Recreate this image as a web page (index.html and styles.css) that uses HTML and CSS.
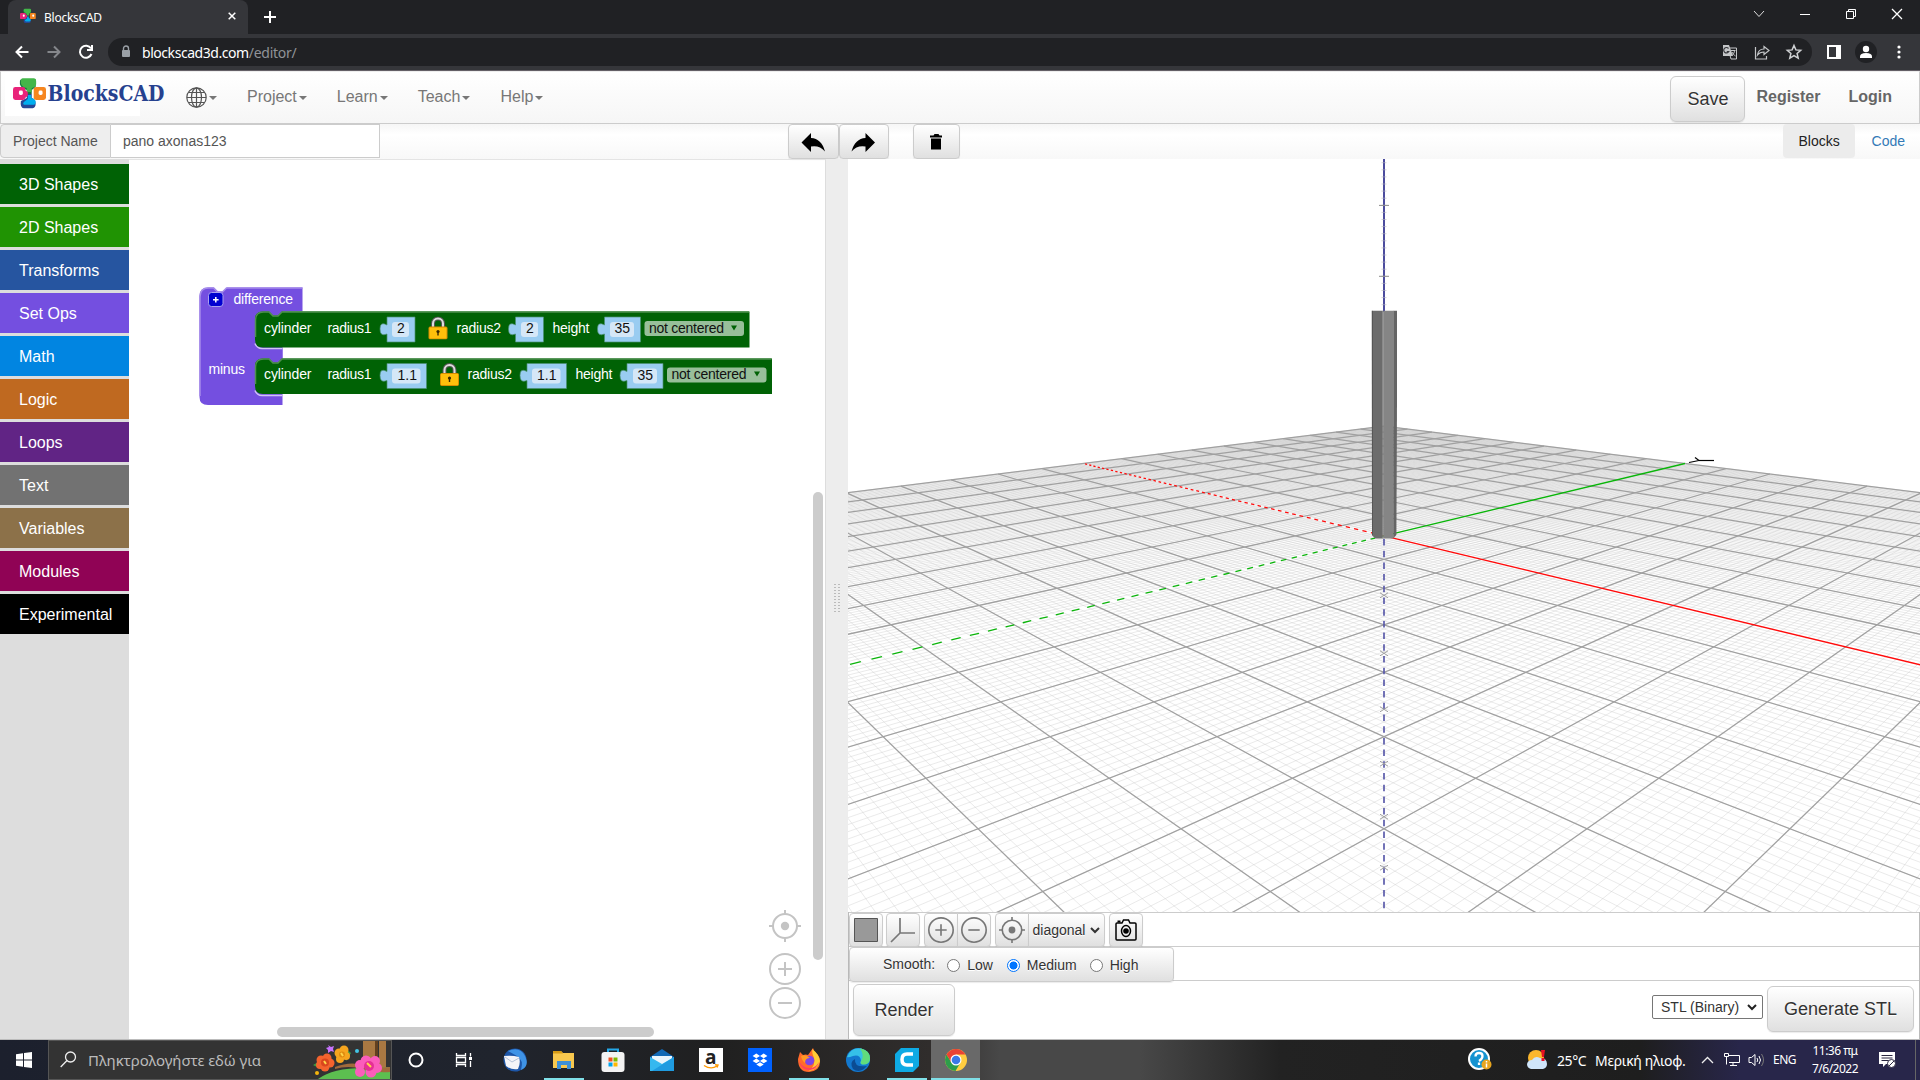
FILE: index.html
```html
<!DOCTYPE html>
<html lang="en">
<head>
<meta charset="utf-8">
<title>BlocksCAD</title>
<link rel="stylesheet" href="styles.css">
</head>
<body>
<svg class="defs" width="0" height="0">
  <defs>
    <symbol id="logo" viewBox="0 0 34 31">
      <path d="M7 3Q7 1 9 1H23V9L19 12V16H14V12Q8 10 7 6Z" fill="#1a7a40"/>
      <path d="M10 0H21Q23.500 0 23.500 3V6Q23 9 19 10V14H14V10Q9 9 8 5Q7.500 0 10 0Z" fill="#43b649"/>
      <path d="M8 23L14 20V16H19V20Q23 21 23 26Q23 30 20 30.500H11Q7 30 8 23Z" fill="#264796"/>
      <path d="M11 24L15 21V17H18.500V20Q23 21 23 24Q23 27 20 27H13Q9 27 11 24Z" fill="#00aeef"/>
      <rect x="0" y="9" width="12.500" height="13" rx="2.500" fill="#e9237a"/>
      <path d="M12 12l3 2v4l-3 2z" fill="#e9237a"/>
      <rect x="21" y="9" width="12.500" height="13" rx="2.500" fill="#f6861f"/>
      <rect x="6" y="12.500" width="4" height="4.500" rx="1.500" fill="#fff"/>
      <rect x="26" y="12.500" width="4" height="4.500" rx="1.500" fill="#fff"/>
    </symbol>
    <symbol id="lock" viewBox="0 0 20 23">
      <path d="M5 12V7a5 5 0 0 1 10 0v5" fill="none" stroke="#555" stroke-width="4"/>
      <path d="M5 12V7a5 5 0 0 1 10 0v5" fill="none" stroke="#ddd" stroke-width="2"/>
      <rect x="1" y="10.500" width="18" height="12" rx="1" fill="#ffc00b" stroke="#d98c00"/>
      <circle cx="10" cy="15" r="1.600" fill="#3a2800"/><path d="M9.300 15h1.400v4H9.300z" fill="#3a2800"/>
    </symbol>
    <symbol id="target" viewBox="0 0 32 32">
      <g fill="none" stroke="currentColor" stroke-width="2"><circle cx="16" cy="16" r="12"/><path d="M16 0v4M16 28v4M0 16h4M28 16h4"/></g><circle cx="16" cy="16" r="4.200" fill="currentColor"/>
    </symbol>
    <symbol id="plus" viewBox="0 0 32 32"><g fill="none" stroke="currentColor" stroke-width="2"><circle cx="16" cy="16" r="15"/><path d="M9 16h14M16 9v14"/></g></symbol>
    <symbol id="minus" viewBox="0 0 32 32"><g fill="none" stroke="currentColor" stroke-width="2"><circle cx="16" cy="16" r="15"/><path d="M9 16h14"/></g></symbol>
  </defs>
</svg>

<div class="tabstrip">
  <div class="tab">
    <svg width="16" height="16"><use href="#logo"/></svg>
    <span class="tab-title">BlocksCAD</span>
    <svg class="tab-close" width="8" height="8" viewBox="0 0 8 8"><path d="M.7.7l6.600 6.600M7.300.7L.7 7.300" stroke="#fff" stroke-width="1.500"/></svg>
  </div>
  <svg class="new-tab" width="12" height="12"><path d="M6 0v12M0 6h12" stroke="#fff" stroke-width="2"/></svg>
  <div class="window-controls">
    <svg width="46" height="34"><path d="M18 11l5 5.500 5-5.500" stroke="#ddd" fill="none"/></svg>
    <svg width="46" height="34"><path d="M18 14.500h10" stroke="#fff"/></svg>
    <svg width="46" height="34"><path d="M18.500 11.500h7v7h-7zM20.500 11.500v-2h7v7h-2" stroke="#fff" fill="none"/></svg>
    <svg width="46" height="34"><path d="M18 9l10 10M28 9L18 19" stroke="#fff" stroke-width="1.300"/></svg>
  </div>
</div>

<div class="navbar">
  <div class="nav-icons">
    <svg width="32" height="28"><path d="M28.500 14H16.500M22 8.500L16.500 14l5.500 5.500" stroke="#fff" stroke-width="2" fill="none"/></svg>
    <svg width="32" height="28"><path d="M15.500 14h12M22 8.500l5.500 5.500-5.500 5.500" stroke="#85878b" stroke-width="2" fill="none"/></svg>
    <svg width="32" height="28"><path d="M27 10.500A6 6 0 1 0 27.500 16M28 7v5h-5" stroke="#fff" stroke-width="2" fill="none"/></svg>
  </div>
  <div class="omnibox">
    <svg width="10" height="14"><path d="M2.500 6V3.500a2.500 2.500 0 0 1 5 0V6" stroke="#9aa0a6" stroke-width="1.400" fill="none"/><rect x="1" y="5" width="8" height="7" rx="1" fill="#9aa0a6"/></svg>
    <span class="host">blockscad3d.com</span><span class="path">/editor/</span>
    <div class="omni-icons">
      <svg width="32" height="28"><path d="M14 10h8.500v11H17z" fill="none" stroke="#c4c6c8"/><path d="M9 7h6l4 11H9z" fill="#c4c6c8"/><path d="M14.500 10.500a2.700 2.700 0 1 0 .3 3h-2" stroke="#35363a" stroke-width="1.200" fill="none"/><path d="M17 12.500h4.500M20.500 12.500c0 2-1 3.500-2.500 5M18 14c1 2 1.500 2.500 3.500 4" stroke="#c4c6c8" fill="none"/></svg>
      <svg width="32" height="28"><path d="M9.500 9v12h11v-3M11.500 17c.5-4 3-6 6.500-6V8.500l5 4-5 4V14c-3 0-5 1-6.500 3z" stroke="#c4c6c8" stroke-width="1.200" fill="none"/></svg>
      <svg width="32" height="28"><path d="M16 7.500l1.900 4.400 4.800.4-3.600 3.200 1.100 4.700-4.200-2.500-4.200 2.500 1.100-4.700-3.600-3.200 4.800-.4z" stroke="#d0d2d4" stroke-width="1.500" fill="none"/></svg>
    </div>
  </div>
  <svg class="side-panel" width="14" height="14"><path d="M1 1h12v12H1z" fill="none" stroke="#fff" stroke-width="2"/><path d="M9 1h4v12H9z" fill="#fff"/></svg>
  <svg class="avatar" width="22" height="22"><circle cx="11" cy="11" r="11" fill="#202124"/><circle cx="11" cy="8" r="3.200" fill="#fff"/><path d="M5 17v-1.500Q5 12 11 12t6 3.500V17z" fill="#fff"/></svg>
  <svg class="kebab" width="4" height="14" fill="#fff"><circle cx="2" cy="2" r="1.600"/><circle cx="2" cy="7" r="1.600"/><circle cx="2" cy="12" r="1.600"/></svg>
</div>

<header class="app-header">
  <div class="brand">
    <svg width="135" height="44" viewBox="0 0 135 44"><use href="#logo" x="8" y="6" width="33.500" height="31"/><text class="brand-text" x="42.500" y="28.500" textLength="117" lengthAdjust="spacingAndGlyphs">BlocksCAD</text></svg>
  </div>
  <nav class="menu">
    <a class="globe"><svg width="21" height="21" viewBox="0 0 21 21"><g fill="none" stroke="#555" stroke-width="1.200"><circle cx="10.500" cy="10.500" r="9.700"/><ellipse cx="10.500" cy="10.500" rx="5" ry="9.700"/><path d="M10.500 1v19M1 10.500h19M2.500 5.500h16M2.500 15.500h16"/></g></svg><i class="caret"></i></a>
    <a>Project<i class="caret"></i></a><a>Learn<i class="caret"></i></a><a>Teach<i class="caret"></i></a><a>Help<i class="caret"></i></a>
  </nav>
  <div class="account"><button class="btn large save">Save</button><a class="register">Register</a><a>Login</a></div>
</header>

<div class="project-bar">
  <label class="addon">Project Name</label><div class="name-input">pano axonas123</div>
  <div class="edit-buttons">
    <button class="btn"><svg width="24" height="19"><path d="M.5 10.500L10 1v5Q20.500 6.500 24 19.500 18.500 13 10 14.500V20z" fill="#000"/></svg></button>
    <button class="btn"><svg width="24" height="19"><path d="M23 10.500L13.500 1v5Q3 6.500-.5 19.500 5 13 13.500 14.500V20z" fill="#000"/></svg></button>
    <button class="btn trash"><svg width="12" height="16"><path d="M-1 1.500h3.500l1-1.500h4l1 1.500H11v2H-1zM0 4.500h10v11H0z" fill="#000"/></svg></button>
  </div>
  <div class="view-tabs"><a class="active">Blocks</a><a>Code</a></div>
</div>

<main class="editor">
  <aside class="toolbox">
    <div class="cat shapes3d">3D Shapes</div><div class="cat shapes2d">2D Shapes</div><div class="cat transforms">Transforms</div><div class="cat setops">Set Ops</div><div class="cat math">Math</div><div class="cat logic">Logic</div><div class="cat loops">Loops</div><div class="cat text">Text</div><div class="cat variables">Variables</div><div class="cat modules">Modules</div><div class="cat experimental">Experimental</div>
  </aside>
  <section class="workspace">
    <svg class="blocks" width="696" height="880" viewBox="129 159 696 880">
      <path d="M199.500 397V296q0-8.500 8.500-8.500h6l4 4h5l4-4h75.500v24H282.500V358v47H208q-8.500 0-8.500-8z" fill="#744fe0"/>
      <path d="M200 396V297q0-9 8.500-9h5l4 4h5l4-4h76" fill="none" stroke="#a58bea" stroke-width="1.500"/>
      <path d="M256 348H282.500V358H256z" fill="#744fe0"/>
      <path d="M255 343.500q2 5 7 5h20.500M255 390.500q2 5 7 5h20.500" stroke="#d0c3f5" stroke-width="1.500" fill="none"/>
      <path d="M255 319q0-7.500 8-7.500h6l4 4h5l4-4H749.500V347.500H263q-8 0-8-8z" fill="#006205"/>
      <path d="M255.500 337v-17q0-8 8-8h5.500l4 4h5l4-4H749" fill="none" stroke="#4e904f" stroke-width="1.500"/>
      <path d="M255 366q0-7.500 8-7.500h6l4 4h5l4-4H772V394H263q-8 0-8-8z" fill="#006205"/>
      <path d="M255.500 384v-17q0-8 8-8h5.500l4 4h5l4-4H771.500" fill="none" stroke="#4e904f" stroke-width="1.500"/>
      <rect x="208.500" y="292.500" width="14.500" height="14" rx="3" fill="#0000d0" stroke="#aaa0f0"/>
      <path d="M215.800 297v5.500M213 299.700h5.600" stroke="#fff" stroke-width="1.500"/>
      <g class="block-label">
        <text x="233.500" y="304" textLength="59.500">difference</text><text x="208.500" y="374" textLength="36.500">minus</text>
        <text x="264" y="333" textLength="47.500">cylinder</text><text x="327.500" y="333" textLength="44">radius1</text><text x="456.500" y="333" textLength="44.500">radius2</text><text x="552.500" y="333" textLength="37">height</text>
        <text x="264" y="379" textLength="47.500">cylinder</text><text x="327.500" y="379" textLength="44">radius1</text><text x="467.500" y="379" textLength="44.500">radius2</text><text x="575.500" y="379" textLength="37">height</text>
      </g>
      <g class="value">
        <path d="M387 317h28v25h-28v-8q-7 3-7-5t7-4zM515.500 317h28v25h-28v-8q-7 3-7-5t7-4zM604.500 317h36v25h-36v-8q-7 3-7-5t7-4z"/>
        <path d="M387 363.500h39.500v25H387v-8q-7 3-7-5t7-4zM527 363.500h39.500v25H527v-8q-7 3-7-5t7-4zM627 363.500h36v25h-36v-8q-7 3-7-5t7-4z"/>
      </g>
      <g class="field">
        <rect x="392" y="322" width="17" height="15" rx="3"/><rect x="521" y="322" width="17" height="15" rx="3"/><rect x="610" y="322" width="24" height="15" rx="3"/>
        <rect x="392" y="368.500" width="28.500" height="15" rx="3"/><rect x="532" y="368.500" width="28.500" height="15" rx="3"/><rect x="633" y="368.500" width="24" height="15" rx="3"/>
      </g>
      <g class="drop"><rect x="644.500" y="321" width="99.500" height="15" rx="3"/><rect x="667" y="367.500" width="99.500" height="15" rx="3"/></g>
      <g class="field-text">
        <text x="397" y="333">2</text><text x="526" y="333">2</text><text x="614.500" y="333">35</text><text x="397.500" y="380">1.1</text><text x="537" y="380">1.1</text><text x="637.500" y="380">35</text>
        <text x="649" y="333" textLength="75">not centered</text><text x="671.500" y="379" textLength="75">not centered</text>
      </g>
      <path d="M731 325.500h6l-3 5zM754 371.500h6l-3 5z" fill="#006205"/>
      <use href="#lock" x="428" y="316.500" width="20" height="23"/><use href="#lock" x="439.500" y="363" width="20" height="23"/>
    </svg>
    <div class="zoom-controls"><svg width="32" height="32"><use href="#target"/></svg><svg class="zin" width="32" height="32"><use href="#plus"/></svg><svg width="32" height="32"><use href="#minus"/></svg></div>
    <div class="vscroll"></div><div class="hscroll"></div>
  </section>
  <div class="splitter"><i></i><i></i></div>
  <section class="viewer">
    <canvas id="scene" width="1072" height="753"></canvas>
    <div class="view-buttons">
      <button class="btn"><svg width="24" height="24"><path d="M.5.5h23v23H.5z" fill="#999" stroke="#555"/></svg></button>
      <button class="btn axes"><svg width="26" height="26"><path d="M10 1v15h15M10 16l-9 9" fill="none" stroke="#777" stroke-width="1.700"/></svg></button>
      <button class="btn left"><svg width="26" height="26"><use href="#plus"/></svg></button><button class="btn right"><svg width="26" height="26"><use href="#minus"/></svg></button>
      <button class="btn left aim"><svg width="26" height="26"><use href="#target"/></svg></button><div class="btn right pick">diagonal<svg width="10" height="7"><path d="M1 1l4 4 4-4" fill="none" stroke="#333" stroke-width="2"/></svg></div>
      <button class="btn camera"><svg width="22" height="22"><g fill="none" stroke="#000" stroke-width="1.500"><path d="M3 4h4l1.500-3h5L15 4h5q1 0 1 1v15q0 1-1 1H2q-1 0-1-1V5q0-1 1-1z"/><ellipse cx="11" cy="12" rx="4.500" ry="5.500"/></g><circle cx="11" cy="12" r="2.800"/><path d="M2.500 1.500h3v2h-3z"/></svg></button>
    </div>
    <div class="smooth-row"><div class="btn smooth"><span>Smooth:</span><i class="radio"></i><b>Low</b><i class="radio on"></i><b>Medium</b><i class="radio"></i><b>High</b></div></div>
    <div class="render-row">
      <button class="btn large render">Render</button>
      <div class="select">STL (Binary)<svg width="10" height="7"><path d="M1 1l4 4 4-4" fill="none" stroke="#222" stroke-width="2"/></svg></div>
      <button class="btn large generate">Generate STL</button>
    </div>
  </section>
</main>

<footer class="taskbar">
  <div class="start"><svg width="16" height="16" fill="#fff"><path d="M0 2.200L7 1.200V7.500H0zM8 1L16 0V7.500H8zM0 8.500H7V14.800L0 13.800zM8 8.500H16V16L8 15z"/></svg></div>
  <div class="search">
    <svg width="17" height="17"><circle cx="10.500" cy="6" r="5" fill="none" stroke="#eee" stroke-width="1.300"/><path d="M7 9.500L.7 16" stroke="#eee" stroke-width="1.300"/></svg>
    <span>Πληκτρολογήστε εδώ για</span>
    <svg class="flowers" width="78" height="38">
      <path d="M50 0h12v38H50zM66 0h7v32h-7z" fill="#a97842"/><path d="M62 0h3v30h-3z" fill="#63401f"/>
      <path d="M5 38Q20 27 50 27l27-1v12z" fill="#5cbf50"/><path d="M22 26q15-6 28-2 12 3 27 2v5q-15 1-28-3-14-4-27 0z" fill="#a06a3c"/>
      <path d="M0 24l9-5 6 5-7 4zM31 6l7 6-5 8z" fill="#3d9b3f"/>
      <g fill="#f4632e"><circle cx="8" cy="19" r="4.500"/><circle cx="14" cy="17" r="4.500"/><circle cx="17" cy="22" r="4.500"/><circle cx="12" cy="26" r="4.500"/><circle cx="7" cy="24" r="4"/></g><circle cx="12" cy="21.500" r="4" fill="#d9461d"/>
      <g fill="#f6a51e"><circle cx="26" cy="12" r="4.500"/><circle cx="31" cy="9" r="4.500"/><circle cx="33" cy="15" r="4"/><circle cx="27" cy="18" r="4"/></g><circle cx="29" cy="13.500" r="3" fill="#e08c10"/>
      <g fill="#fb5dbb"><circle cx="47" cy="24" r="5"/><circle cx="53" cy="20" r="5.500"/><circle cx="62" cy="20" r="5"/><circle cx="64" cy="27" r="5"/><circle cx="58" cy="31" r="5.500"/><circle cx="47" cy="31" r="5"/></g><circle cx="56" cy="25" r="5" fill="#e52f96"/>
      <path d="M54 22l4 4M11 20l2 3M28 12l2 3" stroke="#ffd54a" stroke-width="2"/><circle cx="44" cy="10" r="2" fill="#43c5e4"/><circle cx="4" cy="32" r="2" fill="#f4b50e"/><path d="M15 4l3 2 3-1-1 3 1 3-3-1-3 2v-3l-2-2 3-1z" fill="#c874ff"/>
    </svg>
  </div>
  <div class="apps">
    <div><svg width="24" height="24"><circle cx="12" cy="12" r="6.500" fill="none" stroke="#fff" stroke-width="2"/></svg></div>
    <div><svg width="24" height="24"><path d="M4.500 5v2.500h9V5M4.500 19v-2.500h9V19M4.500 9.500h9v5h-9zM18.500 5v3.500M18.500 13v6" stroke="#fff" fill="none" stroke-width="1.300"/><path d="M17 9h3v3h-3z" fill="#fff"/></svg></div>
    <div><svg width="24" height="24"><circle cx="12" cy="12" r="11.500" fill="#1d56a8"/><path d="M5 3Q17-2 22 8t-4 14Q21 12 14 8T5 3z" fill="#3f93e6"/><path d="M1 8q8-1 15 1 2 6-1 12-7 1-12-3z" fill="#f4f4f8"/><path d="M2 9l7 5 7-4" fill="none" stroke="#b5c3da"/></svg></div>
    <div class="open"><svg width="24" height="24"><path d="M1 3h8l2 2h11v15H1z" fill="#f8c84e"/><path d="M1 3h8l2 2.500H1z" fill="#d69a14"/><path d="M5 21v-8h14v8h-4v-4H9v4z" fill="#3e90d6"/></svg></div>
    <div><svg width="24" height="24"><path d="M7 6V1.500h10V6" fill="none" stroke="#24a8e8" stroke-width="2"/><rect x=".5" y="4" width="23" height="20" rx="3" fill="#f3f3f3"/><path d="M7.500 9.500h4v4h-4z" fill="#f25022"/><path d="M12.500 9.500h4v4h-4z" fill="#7fba00"/><path d="M7.500 14.500h4v4h-4z" fill="#00a4ef"/><path d="M12.500 14.500h4v4h-4z" fill="#ffb900"/></svg></div>
    <div><svg width="24" height="24"><path d="M0 9l12-8 12 8v14H0z" fill="#1269b5"/><path d="M2 8h20v10H2z" fill="#eaf5fc"/><path d="M0 9l12 7 12-7v14H0z" fill="#35b8ef"/><path d="M24 9v14H2z" fill="#1f9be0"/></svg></div>
    <div><svg width="24" height="24"><path d="M0 0h24v24H0z" fill="#fff"/><text class="amazon" x="6" y="16">a</text><path d="M5 17.500q7 4.500 13 .5M16 16.800l3 .3-1 2.500" stroke="#f90" stroke-width="1.400" fill="none"/></svg></div>
    <div><svg width="24" height="24"><path d="M0 0h24v24H0z" fill="#0061fe"/><path d="M8.300 5.500l3.700 2.400-3.700 2.400-3.700-2.400zM15.700 5.500l3.700 2.400-3.700 2.400L12 7.900zM8.300 10.500l3.700 2.400-3.700 2.400-3.700-2.400zM15.700 10.500l3.700 2.400-3.700 2.400-3.700-2.400zM12 14.200l3.700 2.300-3.700 2.300-3.700-2.300z" fill="#fff"/></svg></div>
    <div class="open"><svg width="24" height="24"><path d="M1 11L3 4l3 3q3-1 5 0l5-7q1 3 3 5 4 3 4 9 0 9-11 10Q1 24 1 11z" fill="#ff6a2b"/><path d="M15 1q7 5 8 12-2 9-11 10 7-6 5-13-2-4-2-9z" fill="#ffcb35"/><path d="M2 13q2 9 11 9 7-1 9-8-4 7-11 6-6-1-9-7z" fill="#ff3d62"/><circle cx="12.500" cy="12.500" r="4.800" fill="#7d45e6"/><path d="M4 8q5-2 9 2-5 0-5 5-3-2-4-7z" fill="#ff9a24"/></svg></div>
    <div><svg width="24" height="24"><circle cx="12" cy="12" r="12" fill="#1378ce"/><path d="M1 9Q5-1 15 .5q9 2 9 10 0 6-7 6-4 0-2-4Q14 6 7 8q-5 2-6 1z" fill="#35c1e8"/><path d="M15 .5q9 2 9 10 0 6-7 6-3 0-2-3 4-6-1-13z" fill="#61dc7c"/><path d="M9 11q-1 9 12 7-7 8-14 3-4-7 2-10z" fill="#0b4c93"/></svg></div>
    <div class="open"><svg width="24" height="24"><path d="M6 0h18v18l-6 6H0V6z" fill="#0eaae4"/><path d="M18 6h-6q-5 0-5 5.500t5 5.500h6" stroke="#fff" stroke-width="3.500" fill="none"/></svg></div>
    <div class="open active"><svg width="24" height="24"><circle cx="12" cy="12" r="11" fill="#ffcd40"/><path d="M2.500 6.500A11 11 0 0 0 11.500 23l5-8.500-9 0z" fill="#2d9d4b"/><path d="M12 12L2.500 6.500A11 11 0 0 1 21.500 6.500H12z" fill="#ea4335"/><path d="M2.500 6.500L7 14l5-7z" fill="#ea4335"/><circle cx="12" cy="12" r="5.500" fill="#fff"/><circle cx="12" cy="12" r="4.300" fill="#3b78e7"/></svg></div>
  </div>
  <div class="tray">
    <svg width="24" height="24" class="help"><circle cx="11" cy="11" r="10" fill="#1593d1" stroke="#fff" stroke-width="2"/><path d="M7.500 8.500q0-3.500 3.500-3.500t3.500 3-3.500 5M11 14.500V17" stroke="#fff" stroke-width="2.300" fill="none"/><circle cx="18.500" cy="16.500" r="5" fill="#e8a51e"/><path d="M18.500 15.500v4M18.500 13v1.500" stroke="#fff" stroke-width="1.500"/></svg>
    <svg width="22" height="22" class="weather"><circle cx="10" cy="9" r="8" fill="#fbb72d"/><path d="M5 20q-4-1-4-5 1-4 5-4 3-5 8-2 7 0 7 6 0 4-4 5z" fill="#cfe5fa"/><path d="M15 1h4l-1 7h-2zM15.500 9h3v3h-3z" fill="#e81123"/></svg>
    <span class="temp">25°C</span><span class="cond">Μερική ηλιοφ.</span>
    <svg class="chev" width="13" height="8"><path d="M1 7l5.500-5.500L12 7" stroke="#eee" fill="none" stroke-width="1.300"/></svg>
    <svg class="net" width="16" height="16"><path d="M4 3.500h11.500v7H5M9 10.500v3M6 13.500h7M.5 1.500h4v3h-4zM2.500 4.500v8" stroke="#fff" fill="none"/></svg>
    <svg class="vol" width="17" height="16"><path d="M1 5.500h2.500L7 2.500v11l-3.500-3H1zM9 6q1.500 2 0 4M11 4q3 4 0 8" stroke="#fff" fill="none"/><path d="M13.500 2q4 6 0 12" stroke="#777" fill="none"/></svg>
    <span class="lang">ENG</span>
    <div class="clock"><span>11:36 πμ</span><span>7/6/2022</span></div>
    <svg class="notif" width="17" height="16"><path d="M0 0h16v12H7l-3 3v-3H0z" fill="#fff"/><path d="M2.500 3.500h11M2.500 6h11M2.500 8.500h7" stroke="#2a2740"/><circle cx="12.500" cy="11.500" r="4" fill="#fff" stroke="#2a2740"/><path d="M10 14l5-5" stroke="#2a2740"/></svg>
    <i class="peek"></i>
  </div>
</footer>
<script src="scene.js"></script>
</body>
</html>
```

FILE: styles.css
```css
* { box-sizing: border-box; }
body { margin: 0; width: 1920px; height: 1080px; overflow: hidden; display: flex; flex-direction: column; font-family: "Liberation Sans", Arial, sans-serif; font-size: 14px; color: #333; background: #fff; }
svg { display: block; flex: none; overflow: visible; }
.defs { position: absolute; }
i, b { font-style: normal; font-weight: normal; }
button { font-family: inherit; padding: 0; margin: 0; }

.tabstrip { height: 34px; flex: none; background: #202124; display: flex; padding-left: 8px; align-items: center; }
.tab { width: 240px; height: 34px; background: #35363a; border-radius: 8px 8px 0 0; display: flex; align-items: center; padding: 0 12px; }
.tab svg { margin-top: -2px; }
.tab-title { font: 12px "Noto Sans", sans-serif; letter-spacing: -.25px; color: #fff; margin-left: 8px; flex: 1; }
.new-tab { margin-left: 16px; }
.window-controls { margin-left: auto; display: flex; }
.navbar { height: 37px; flex: none; background: #35363a; border-bottom: 1px solid #645f66; display: flex; align-items: center; }
.nav-icons { display: flex; width: 108px; }
.omnibox { width: 1704px; height: 28px; border-radius: 14px; background: #202124; display: flex; align-items: center; padding-left: 13px; font: 14px "Noto Sans", sans-serif; letter-spacing: -.45px; color: #fff; }
.host { margin-left: 11px; }
.path { color: #909397; letter-spacing: -.25px; }
.omni-icons { display: flex; margin-left: auto; padding-right: 2px; }
.side-panel { margin-left: 15px; }
.avatar { margin-left: 14px; }
.kebab { margin-left: 20px; }

.btn { border: 1px solid #ccc; border-radius: 4px; background: linear-gradient(#fff, #e0e0e0); color: #333; text-shadow: 0 1px 0 #fff; box-shadow: 0 1px 1px rgba(0,0,0,.08); display: flex; align-items: center; justify-content: center; }
.btn.large { font-size: 18px; border-radius: 6px; }
.app-header { height: 53px; flex: none; display: flex; background: linear-gradient(#fff, #f6f6f6); border: 1px solid #ccc; border-top-color: #eee; align-items: flex-start; font-size: 16px; color: #777; }
.brand { width: 135px; margin: 0 0 0 4px; background: #fff; }
.brand-text { font: bold 22px "DejaVu Serif", serif; fill: #26418f; }
.menu { display: flex; margin-left: 46px; height: 50px; align-items: center; gap: 30px; }
.menu a { display: flex; align-items: center; }
.caret { border: 4px solid transparent; border-top-color: #777; border-bottom: 0; margin-left: 2px; margin-top: 2px; }
.account { margin-left: auto; display: flex; align-items: center; height: 50px; font-weight: bold; padding-right: 27px; color: #666; }
.save { width: 75px; height: 46px; font-weight: normal; margin-top: 4px; }
.register { margin: 0 28px 0 11px; }
.account a { margin-top: -1px; }

.project-bar { height: 35px; flex: none; display: flex; background: linear-gradient(#f6f6f6, #fff 30%, #f8f8f8); font-size: 14px; color: #555; }
.addon { width: 111px; height: 34px; border: 1px solid #ccc; border-radius: 4px 0 0 4px; background: #eee; line-height: 32px; padding-left: 12px; }
.name-input { width: 269px; height: 34px; border: 1px solid #ccc; border-left: 0; background: #fff; line-height: 32px; padding-left: 12px; }
.edit-buttons { display: flex; margin-left: 408px; }
.edit-buttons .btn { width: 50.500px; height: 35px; }
.edit-buttons .trash { width: 47px; margin-left: 24px; }
.view-tabs { display: flex; margin-left: auto; line-height: 34px; }
.view-tabs a { padding: 0 16px; height: 34px; color: #337ab7; }
.view-tabs .active { width: 72px; background: #ececec; color: #222; border-radius: 4px; margin-right: 1px; }
.view-tabs a:last-child { padding-right: 15px; }

.editor { flex: 1; display: flex; min-height: 0; border-bottom: 1px solid #bbb; }
.toolbox { width: 129px; background: #ddd; padding-top: 5px; }
.cat { height: 40px; margin-bottom: 3px; color: #fff; font-size: 16px; line-height: 41px; padding-left: 19px; white-space: nowrap; }
.shapes3d { background: #006205; } .shapes2d { background: #209303; } .transforms { background: #2655a0; } .setops { background: #744fe0; } .math { background: #0185e1; } .logic { background: #bf6920; } .loops { background: #612485; } .text { background: #727272; } .variables { background: #8c7149; } .modules { background: #900355; } .experimental { background: #000; }
.workspace { width: 697px; position: relative; border-right: 1px solid #ddd; border-top: 1px solid #e4e4e4; }
.blocks { margin-top: -1px; }
.block-label { font-size: 14px; fill: #fff; }
.field-text { font-size: 14px; fill: #111; }
.value { fill: #99ccf1; stroke: #4b8f72; stroke-width: .7; }
.field { fill: #d5e7f7; }
.drop { fill: #98bf9a; }
.zoom-controls { position: absolute; left: 640px; top: 750px; color: #c4c4c4; }
.zin { margin: 11px 0 2px; }
.vscroll { position: absolute; left: 684px; top: 332px; width: 10px; height: 468px; border-radius: 5px; background: #ccc; }
.hscroll { position: absolute; left: 148px; top: 867px; width: 377px; height: 10px; border-radius: 5px; background: #ccc; }
.splitter { width: 22px; background: #ededed; display: flex; align-items: center; justify-content: center; gap: 2px; padding-right: 1px; }
.splitter i { width: 2px; height: 30px; background: repeating-linear-gradient(#bbb 0 1px, transparent 1px 3px); }
.viewer { flex: 1; border: 1px solid #bbb; border-top: 0; border-bottom: 0; display: flex; flex-direction: column; min-width: 0; }
#scene { display: block; height: 753px; flex: none; width: 1072px; margin: 0 -1px; }
.view-buttons { display: flex; height: 35px; border-top: 1px solid #ccc; border-bottom: 1px solid #ccc; }
.view-buttons .btn { width: 34px; height: 34px; color: #777; }
.view-buttons .axes { margin: 0 4px 0 3px; }
.view-buttons .left { border-radius: 4px 0 0 4px; width: 34px; }
.view-buttons .right { border-radius: 0 4px 4px 0; margin-left: -1px; }
.view-buttons .aim { margin-left: 4px; }
.view-buttons .pick { width: 77px; gap: 5px; font-size: 14px; color: #333; }
.view-buttons .camera { margin-left: 4px; }
.smooth-row { height: 34px; border-bottom: 1px solid #ccc; }
.smooth { width: 325px; height: 35px; justify-content: flex-start; padding-left: 33px; }
.smooth span { margin-top: -1px; }
.radio { width: 13px; height: 13px; border: 1px solid #777; border-radius: 50%; background: #fff; margin: 2px 7px 0 12px; }
.smooth b + .radio { margin-left: 14px; }
.smooth b + .radio:nth-last-child(2) { margin-left: 13px; }
.radio.on { border-color: #0075ff; background: radial-gradient(#0075ff 0 3.700px, #fff 4.300px); }
.render-row { display: flex; flex: 1; padding: 3px 5px 0 4px; align-items: flex-start; }
.render { width: 102px; height: 52px; }
.select { margin: 11px 4px 0 auto; width: 111px; height: 24px; border: 1px solid #767676; border-radius: 2px; display: flex; align-items: center; padding: 0 5px 0 8px; justify-content: space-between; }
.generate { width: 147px; height: 46px; margin-top: 2px; }

.taskbar { height: 40px; flex: none; background: linear-gradient(90deg, #1c202d 0, #20242d 500px, #202020 720px, #302d2c 930px, #484848 1000px, #484848 1140px, #222 1280px, #1e1e1e 1640px, #28264a 1740px, #28264a); display: flex; font-family: "Noto Sans", "Open Sans", sans-serif; color: #fff; }
.start { width: 48px; display: flex; align-items: center; justify-content: center; }
.search { width: 344px; background: #333; border: 1px solid #555; display: flex; align-items: center; padding-left: 11px; overflow: hidden; }
.search > svg:first-child { margin-top: -1px; }
.search span { margin-left: 11px; font-size: 15px; color: #bbb; letter-spacing: -.08px; white-space: nowrap; }
.search .flowers { margin-left: auto; overflow: hidden; }
.apps { display: flex; }
.apps div { width: 49px; display: flex; align-items: center; justify-content: center; }
.apps div:first-child { width: 48px; }
.apps div:nth-child(2) { width: 48px; margin-right: 1px; }
.apps .open { background: linear-gradient(#80e0e8, #80e0e8) 50% 100% / 40px 2px no-repeat; }
.apps .active { background: linear-gradient(#80e0e8, #80e0e8) 0 100% / 100% 2px no-repeat, #696969; }
.apps div:nth-child(n+3) { transform: translateX(1px); }
.amazon { font: bold 19px "Open Sans", sans-serif; fill: #222; }
.tray { margin-left: auto; display: flex; align-items: center; width: 452px; font-size: 14px; white-space: nowrap; }
.help { flex: none; }
.weather { margin-left: 34px; }
.temp { margin-left: 9px; width: 38px; letter-spacing: -.4px; }
.cond { width: 96px; letter-spacing: -.3px; }
.chev { margin-left: 10px; }
.net { margin-left: 10px; } .vol { margin-left: 8px; }
.lang { margin-left: 8px; font-size: 12px; width: 30px; letter-spacing: -.5px; margin-top: -2px; }
.clock { width: 64px; display: flex; flex-direction: column; align-items: center; font-size: 12px; line-height: 17.500px; letter-spacing: -.5px; margin-top: -1px; }
.notif { margin-left: 12px; margin-top: -1px; }
.peek { width: 1px; height: 40px; background: #666; margin-left: auto; margin-right: 4px; }
```

FILE: scene.js
```javascript
const canvas = document.getElementById('scene');
const ctx = canvas.getContext('2d');
const ORIGIN_X = 536;
const HORIZON = 150.5;

// Ground plane (u, v), in tens of units, to canvas coordinates.
function project(u, v) {
  const depth = 1 / (0.0044173 - 0.00041525 * (u + v) / 2);
  return [ORIGIN_X + 0.3909 * (u - v) / 2 * depth, HORIZON + depth];
}

function line(a, b) {
  ctx.beginPath();
  ctx.moveTo(...a);
  ctx.lineTo(...b);
  ctx.stroke();
}

// The two centre lines are left out: the axes are drawn there.
function grid(step, color, width) {
  ctx.strokeStyle = color;
  ctx.lineWidth = width;
  for (let i = -100; i <= 100; i += step) {
    if (i === 0) continue;
    line(project(i / 10, -10), project(i / 10, 10));
    line(project(-10, i / 10), project(10, i / 10));
  }
}

function tick(y, half, color) {
  ctx.strokeStyle = color;
  ctx.lineWidth = 1;
  line([ORIGIN_X - half, y], [ORIGIN_X + half, y]);
}

// Solid in the positive direction, dashed in the negative.
function axis(positive, negative, color) {
  ctx.strokeStyle = color;
  ctx.lineWidth = 1.3;
  line(project(0, 0), project(10 * positive[0], 10 * positive[1]));
  for (let i = 0; i < 9.9; i += 0.2) {
    line(project(negative[0] * i, negative[1] * i), project(negative[0] * (i + 0.1), negative[1] * (i + 0.1)));
  }
}

ctx.fillStyle = '#fff';
ctx.fillRect(0, 0, 1072, 753);
grid(1, 'rgba(200,200,200,.38)', 1);
grid(10, '#a0a0a0', 1.25);
axis([1, 0], [-1, 0], '#ff0a0a');
axis([0, -1], [0, 1], '#0ab40a');

// Vertical axis below the ground.
ctx.strokeStyle = '#5050a5';
ctx.lineWidth = 1.6;
for (let y = 380; y < 753; y += 11.7) line([ORIGIN_X, y], [ORIGIN_X, y + 6.5]);
ctx.strokeStyle = '#a0a0a0';
ctx.lineWidth = 1;
for (const y of [436.3, 494.3, 550.3, 604.7, 657.7, 708.7]) {
  line([ORIGIN_X - 4, y - 2.5], [ORIGIN_X + 4, y + 2.5]);
  line([ORIGIN_X - 4, y + 2.5], [ORIGIN_X + 4, y - 2.5]);
}

// Vertical axis above the cylinder.
ctx.strokeStyle = '#4c4c9e';
ctx.lineWidth = 2;
line([ORIGIN_X, 0], [ORIGIN_X, 153]);
for (let i = -4; i < 17; i++) tick(117.3 - i * 7.1, 2.5, 'rgba(180,180,190,.6)');
tick(117.3, 5, '#8c8c8c');
tick(46.4, 5, '#8c8c8c');

// Cylinder facets: x start, x end, fill.
const facets = [[523.6, 525, '#484848'], [524.6, 534.4, '#6c6c6c'], [534.2, 535.6, '#7a7a7a'], [535.4, 545.6, '#858585'], [545.4, 549, '#656565']];
ctx.save();
ctx.beginPath();
ctx.moveTo(523.4, 151.5);
ctx.lineTo(549.4, 151.5);
ctx.lineTo(548.4, 376);
ctx.lineTo(545, 379.5);
ctx.lineTo(527, 379.5);
ctx.lineTo(524, 376);
ctx.closePath();
ctx.clip();
for (const [x0, x1, color] of facets) {
  ctx.fillStyle = color;
  ctx.fillRect(x0, 151.5, x1 - x0, 229);
}
ctx.restore();

// Label of the Y axis, seen edge-on.
ctx.strokeStyle = '#000';
ctx.lineWidth = 1.2;
line([851, 301.5], [866, 301.5]);
line([851, 301.5], [847, 298.5]);
line([851, 301.5], [841, 303.5]);
```
